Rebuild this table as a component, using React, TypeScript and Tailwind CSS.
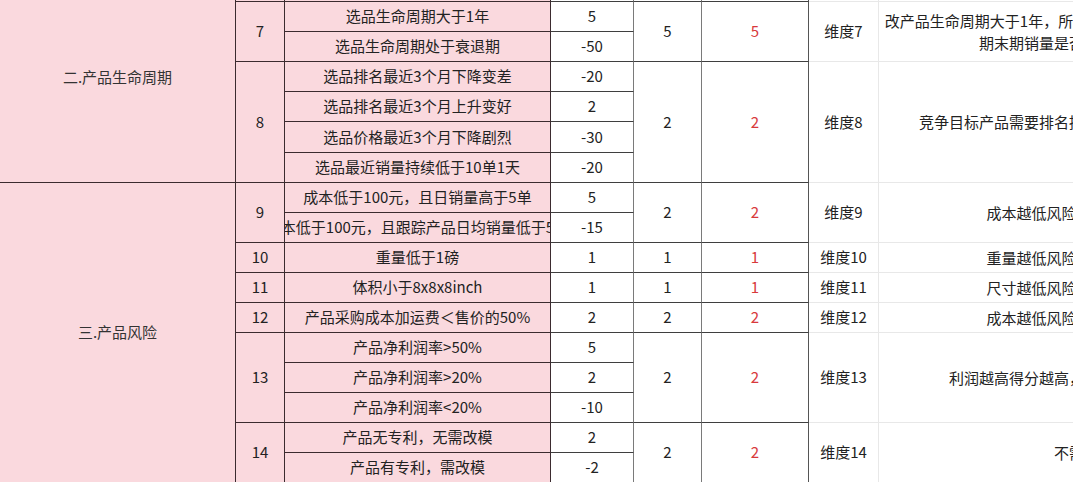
import React from "react";

type Item = { text: string; score: string; tall?: boolean };

type Group = {
  no: string;
  items: Item[];
  weight: string;
  dim: string;
  note: string[];
};

type Category = { title: string; groups: Group[] };

const categories: Category[] = [
  {
    title: "二.产品生命周期",
    groups: [
      // row above the visible area, only its bottom border shows
      {
        no: "",
        items: [{ text: "", score: "" }],
        weight: "",
        dim: "",
        note: [],
      },
      {
        no: "7",
        items: [
          { text: "选品生命周期大于1年", score: "5" },
          { text: "选品生命周期处于衰退期", score: "-50" },
        ],
        weight: "5",
        dim: "维度7",
        note: [
          "改产品生命周期大于1年，所以选品时要重点关注产品生命周",
          "期末期销量是否稳定，避免积压",
        ],
      },
      {
        no: "8",
        items: [
          { text: "选品排名最近3个月下降变差", score: "-20" },
          { text: "选品排名最近3个月上升变好", score: "2" },
          { text: "选品价格最近3个月下降剧烈", score: "-30", tall: true },
          { text: "选品最近销量持续低于10单1天", score: "-20" },
        ],
        weight: "2",
        dim: "维度8",
        note: ["竞争目标产品需要排名提升，价格与销量保持稳定"],
      },
    ],
  },
  {
    title: "三.产品风险",
    groups: [
      {
        no: "9",
        items: [
          { text: "成本低于100元，且日销量高于5单", score: "5" },
          { text: "成本低于100元，且跟踪产品日均销量低于5单", score: "-15" },
        ],
        weight: "2",
        dim: "维度9",
        note: ["成本越低风险越低，利润更高"],
      },
      {
        no: "10",
        items: [{ text: "重量低于1磅", score: "1" }],
        weight: "1",
        dim: "维度10",
        note: ["重量越低风险越低，运费更低"],
      },
      {
        no: "11",
        items: [{ text: "体积小于8x8x8inch", score: "1" }],
        weight: "1",
        dim: "维度11",
        note: ["尺寸越低风险越低，仓储更低"],
      },
      {
        no: "12",
        items: [{ text: "产品采购成本加运费＜售价的50%", score: "2" }],
        weight: "2",
        dim: "维度12",
        note: ["成本越低风险越低，利润更高"],
      },
      {
        no: "13",
        items: [
          { text: "产品净利润率>50%", score: "5" },
          { text: "产品净利润率>20%", score: "2" },
          { text: "产品净利润率<20%", score: "-10" },
        ],
        weight: "2",
        dim: "维度13",
        note: ["利润越高得分越高，利润太低时则会扣分"],
      },
      {
        no: "14",
        items: [
          { text: "产品无专利，无需改模", score: "2" },
          { text: "产品有专利，需改模", score: "-2" },
        ],
        weight: "2",
        dim: "维度14",
        note: ["不需改模"],
      },
    ],
  },
];

function GroupRow({ group }: { group: Group }) {
  return (
    <div className="flex">
      {/* number */}
      <div className="w-[49px] shrink-0 flex items-center justify-center bg-[#fad9de] border-r border-b border-[#3b2b2f]">
        {group.no}
      </div>

      {/* criteria */}
      <div className="w-[266px] shrink-0 flex flex-col">
        {group.items.map((item, i) => (
          <div
            key={i}
            className={`${item.tall ? "h-[31px]" : "h-[30px]"} flex items-center justify-center overflow-hidden whitespace-nowrap bg-[#fad9de] border-r border-b border-[#3b2b2f]`}
          >
            {item.text}
          </div>
        ))}
      </div>

      {/* scores */}
      <div className="w-[83px] shrink-0 flex flex-col">
        {group.items.map((item, i) => (
          <div
            key={i}
            className={`${item.tall ? "h-[31px]" : "h-[30px]"} flex items-center justify-center bg-white border-b border-b-[#3f3f3f] border-r border-r-[#7a7a7a]`}
          >
            {item.score}
          </div>
        ))}
      </div>

      <div className="w-[68px] shrink-0 flex items-center justify-center bg-white border-b border-b-[#3f3f3f] border-r border-r-[#7a7a7a]">
        {group.weight}
      </div>

      <div className="w-[107px] shrink-0 flex items-center justify-center bg-white text-[#d8393b] border-b border-b-[#3f3f3f] border-r border-r-[#555555]">
        {group.weight}
      </div>

      <div className="w-[70px] shrink-0 flex items-center justify-center bg-white border-r border-b border-[#e8e8e8]">
        {group.dim}
      </div>

      <div className="w-[410px] shrink-0 flex flex-col items-center justify-center text-center leading-[22px] whitespace-nowrap bg-white border-b border-[#e8e8e8]">
        {group.note.map((line, i) => (
          <span key={i}>{line}</span>
        ))}
      </div>
    </div>
  );
}

export default function App() {
  return (
    <div className="w-full h-[482px] overflow-hidden bg-white text-[15px] text-[#222222] font-['Noto_Sans_CJK_SC','Noto_Sans',sans-serif]">
      <div className="-mt-[28px] flex flex-col w-max">
        {categories.map((cat) => (
          <div key={cat.title} className="flex">
            {/* category title */}
            <div className="w-[236px] shrink-0 flex items-center justify-center bg-[#fad9de] text-[#333333] border-r border-b border-[#3b2b2f]">
              {cat.title}
            </div>
            <div className="flex flex-col">
              {cat.groups.map((g, i) => (
                <GroupRow key={i} group={g} />
              ))}
            </div>
          </div>
        ))}
      </div>
    </div>
  );
}
